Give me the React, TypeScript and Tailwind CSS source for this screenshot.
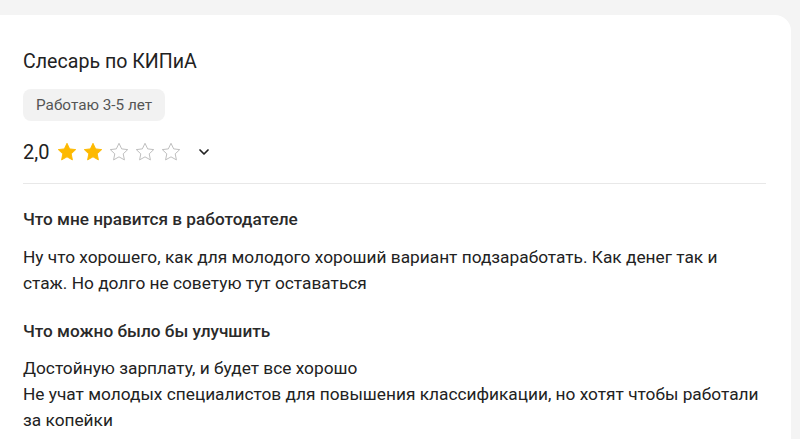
import { ChevronDown } from "lucide-react"

const STAR = "M12 2.5l2.9 6.1 6.6.8-4.9 4.6 1.3 6.6L12 17.3l-5.9 3.3 1.3-6.6-4.9-4.6 6.6-.8z"

function Star({ filled }: { filled: boolean }) {
  return (
    <svg viewBox="0 0 24 24" className="h-[22px] w-[22px]">
      <path
        d={STAR}
        fill={filled ? "#fdb900" : "none"}
        stroke={filled ? "#fdb900" : "#b8b8b8"}
        strokeWidth={1}
        strokeLinejoin="round"
      />
    </svg>
  )
}

export default function App() {
  const rating = 2

  return (
    <div className="min-h-[439px] bg-[#f4f4f4] pt-[15px] font-['Roboto',sans-serif] text-[#222]">
      <div className="w-[791px] rounded-tr-2xl bg-white pl-[23px] pr-[27px] pt-[34px] pb-6">
        <h2 className="text-[19.6px] leading-[26px]">Слесарь по КИПиА</h2>

        <div className="mt-[14px] inline-flex h-8 items-center rounded-lg bg-[#f2f2f2] px-[13px] text-[15.3px] text-[#555]">
          Работаю 3-5 лет
        </div>

        <div className="mt-[19px] flex h-6 items-center">
          <span className="mr-[7px] text-[20px]">2,0</span>
          <div className="flex gap-[4px]">
            {[1, 2, 3, 4, 5].map((i) => (
              <Star key={i} filled={i <= rating} />
            ))}
          </div>
          <ChevronDown className="ml-[14px] h-4 w-4 text-[#222]" strokeWidth={2.6} />
        </div>

        <div className="mt-[19px] mr-[-2px] h-px bg-[#e8e8e8]" />

        <h3 className="mt-[23px] text-[17.2px] font-medium leading-6 text-[#2a2a2a]">Что мне нравится в работодателе</h3>
        <p className="mt-[13px] text-[17.3px] leading-[26px]">
          Ну что хорошего, как для молодого хороший вариант подзаработать. Как денег так и стаж. Но долго не советую тут оставаться
        </p>

        <h3 className="mt-[23px] text-[17.2px] font-medium leading-6 text-[#2a2a2a]">Что можно было бы улучшить</h3>
        <p className="mt-[12px] text-[17.3px] leading-[26px]">
          Достойную зарплату, и будет все хорошо
          <br />
          Не учат молодых специалистов для повышения классификации, но хотят чтобы работали за копейки
        </p>
      </div>
    </div>
  )
}
